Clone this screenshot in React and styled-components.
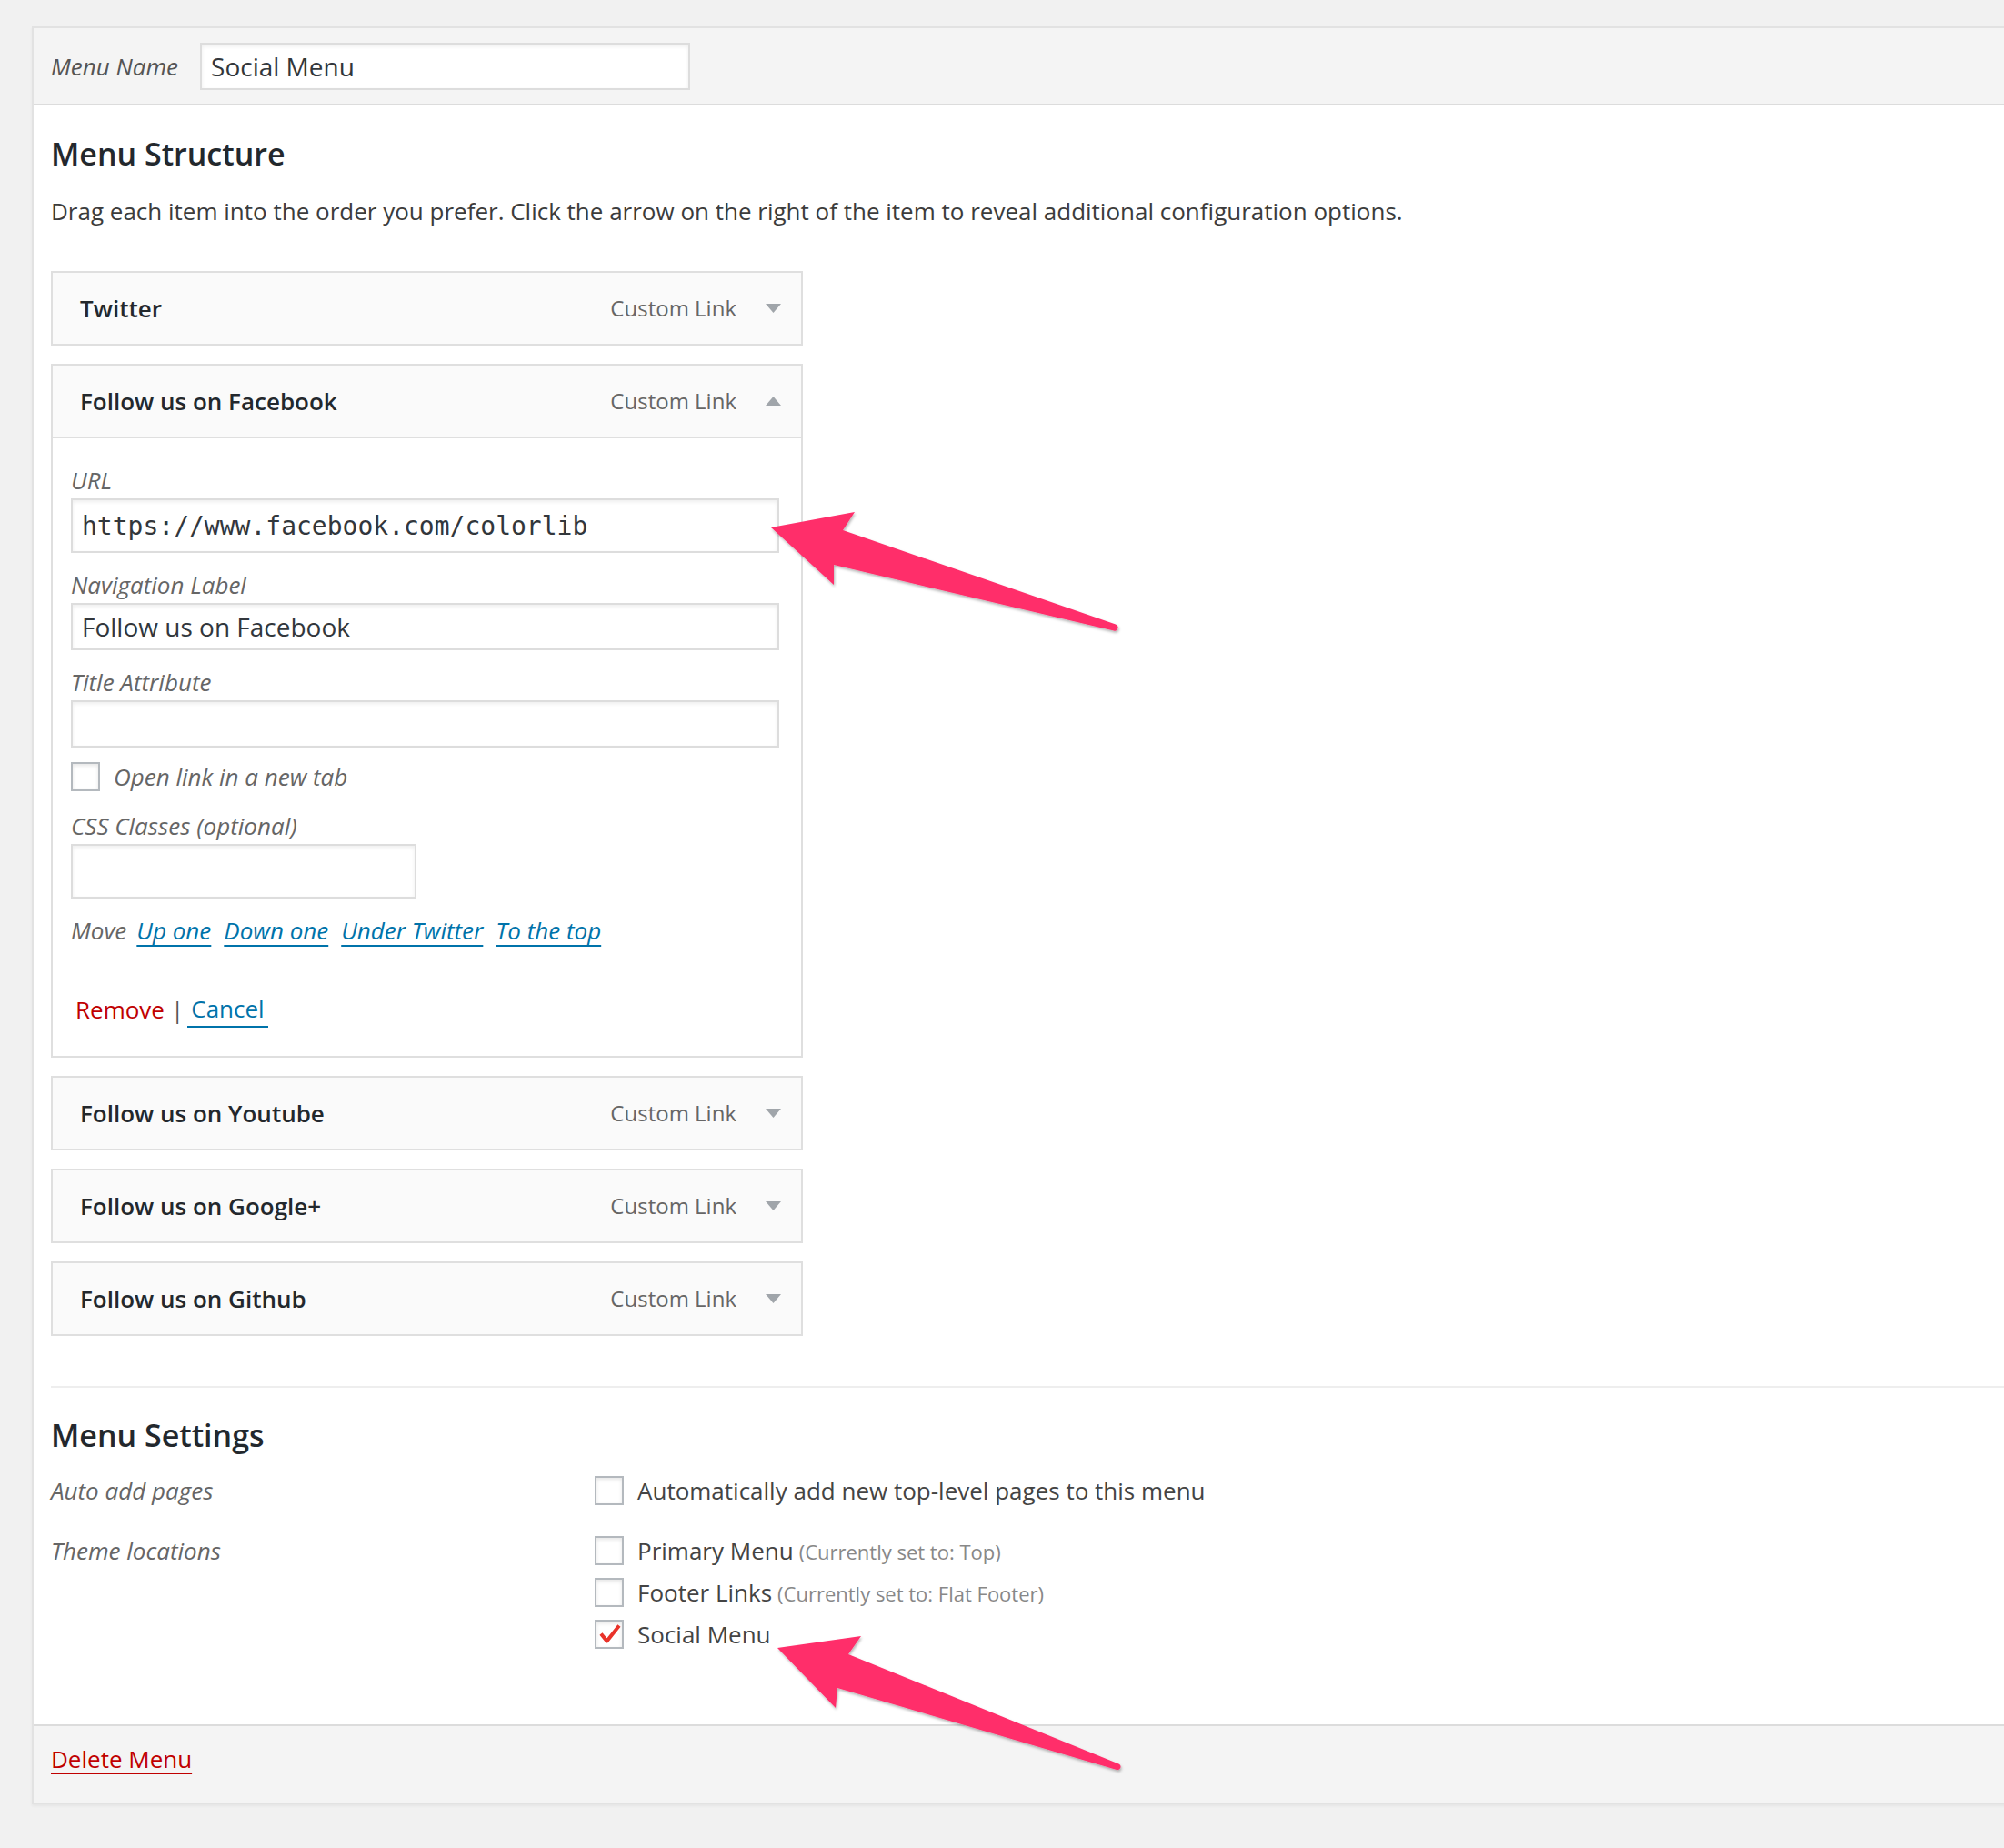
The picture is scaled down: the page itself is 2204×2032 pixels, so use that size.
import React from "react";
import styled, { createGlobalStyle } from "styled-components";

const GlobalStyle = createGlobalStyle`
  html, body { margin: 0; padding: 0; background: #f1f1f1; }
  body {
    font-family: "Open Sans", "Liberation Sans", sans-serif;
    color: #444;
    -webkit-font-smoothing: antialiased;
  }
  *, *::before, *::after { box-sizing: border-box; }
`;

const Page = styled.div`
  position: relative;
  width: 100%;
  height: 2032px;
  padding: 29px 0 0 35px;
  overflow: hidden;
`;

const Panel = styled.div`
  width: calc(100% + 40px);
  background: #fff;
  border: 2px solid #e2e2e2;
  box-shadow: 0 2px 3px rgba(0, 0, 0, 0.05);
`;

const Header = styled.div`
  display: flex;
  align-items: center;
  gap: 24px;
  background: #f4f4f4;
  border-bottom: 2px solid #dcdcdc;
  padding: 16px 19px 15px;
`;

const NameLabel = styled.label`
  font-size: 26px;
  font-style: italic;
  color: #555;
  line-height: 40px;
`;

const TextInput = styled.input`
  display: block;
  width: ${(p) => p.$w}px;
  height: ${(p) => p.$h}px;
  margin: 0;
  padding: 0 10px;
  border: 2px solid #dddddd;
  border-radius: 0;
  background: #fff;
  box-shadow: inset 0 2px 4px rgba(0, 0, 0, 0.07);
  font-family: ${(p) =>
    p.$mono ? '"DejaVu Sans Mono", "Liberation Mono", monospace' : '"Open Sans", sans-serif'};
  font-size: 28px;
  color: #32373c;
  outline: none;
`;

const Body = styled.div`
  padding: 30px 19px 0;
`;

const Heading = styled.h3`
  margin: 0;
  font-size: 34px;
  font-weight: 600;
  line-height: 46px;
  color: #23282d;
`;

const Description = styled.p`
  margin: 20px 0 0;
  font-size: 26px;
  line-height: 40px;
  color: #3c3c3c;
`;

const MenuList = styled.div`
  margin-top: 46px;
  width: 827px;
  display: flex;
  flex-direction: column;
  gap: 20px;
`;

const Handle = styled.div`
  height: 82px;
  display: flex;
  align-items: center;
  border: 2px solid #dfdfdf;
  background: #fafafa;
  padding: 0 22px 0 30px;
`;

const ItemTitle = styled.span`
  flex: 1;
  font-size: 26px;
  font-weight: 600;
  color: #23282d;
  line-height: 40px;
`;

const ItemType = styled.span`
  font-size: 24px;
  color: #666;
  margin-right: 32px;
  line-height: 40px;
`;

const Settings = styled.div`
  display: flex;
  flex-direction: column;
  border: 2px solid #dfdfdf;
  border-top: none;
  padding: 26px 24px 31px 20px;
`;

const FieldLabel = styled.label`
  display: block;
  margin-top: ${(p) => p.$mt || 0}px;
  font-size: 26px;
  font-style: italic;
  line-height: 40px;
  color: #666;
`;

const CheckRow = styled.label`
  display: flex;
  align-items: center;
  gap: 15px;
  height: 40px;
  margin-top: ${(p) => p.$mt || 0}px;
`;

const Box = styled.span`
  width: 32px;
  height: 32px;
  flex: none;
  display: flex;
  align-items: center;
  justify-content: center;
  border: 2px solid #b4b9be;
  background: #fff;
  box-shadow: inset 0 2px 4px rgba(0, 0, 0, 0.1);
`;

const CheckText = styled.span`
  font-size: 26px;
  line-height: 40px;
  font-style: ${(p) => (p.$italic ? "italic" : "normal")};
  color: ${(p) => (p.$italic ? "#666" : "#444")};
  white-space: nowrap;
`;

const Note = styled.span`
  font-size: 22px;
  color: #888;
  margin-left: 6px;
`;

const MoveRow = styled.div`
  display: flex;
  align-items: center;
  gap: 14px;
  height: 40px;
  margin-top: 15px;
  font-size: 26px;
  font-style: italic;
  color: #666;
`;

const MoveWord = styled.span`
  margin-right: -3px;
`;

const MoveLink = styled.a`
  color: #0073aa;
  text-decoration: underline;
  text-decoration-thickness: 2px;
  text-underline-offset: 6px;
  cursor: pointer;
`;

const Actions = styled.div`
  display: flex;
  align-items: center;
  height: 40px;
  margin-top: 47px;
  font-size: 26px;
`;

const RemoveLink = styled.a`
  color: #c00000;
  margin-left: 5px;
  text-decoration: none;
  cursor: pointer;
`;

const Sep = styled.span`
  color: #555;
  margin: 0 4px 0 7px;
`;

const CancelLink = styled.a`
  color: #0073aa;
  padding: 0 4px;
  line-height: 38px;
  border-bottom: 2px solid #0073aa;
  text-decoration: none;
  cursor: pointer;
`;

const SettingsSection = styled.div`
  margin-top: 55px;
  border-top: 2px solid #eeeeee;
  padding: 29px 0 79px;
`;

const SettingsGrid = styled.div`
  display: grid;
  grid-template-columns: 598px 1fr;
  row-gap: 26px;
  margin-top: 18px;
`;

const SettingName = styled.div`
  font-size: 26px;
  font-style: italic;
  line-height: 40px;
  color: #666;
`;

const Options = styled.div`
  display: flex;
  flex-direction: column;
  gap: 6px;
`;

const Footer = styled.div`
  background: #f4f4f4;
  border-top: 2px solid #dcdcdc;
  padding: 16px 19px 28px;
`;

const DeleteLink = styled.a`
  display: inline-block;
  font-size: 26px;
  line-height: 40px;
  color: #c00000;
  text-decoration: underline;
  text-decoration-thickness: 2px;
  text-underline-offset: 5px;
  cursor: pointer;
`;

const Overlay = styled.svg`
  position: absolute;
  top: 0;
  left: 0;
  pointer-events: none;
`;

const Triangle = ({ up }) => (
  <svg width="17" height="10" viewBox="0 0 17 10">
    <polygon points={up ? "0,10 17,10 8.5,0" : "0,0 17,0 8.5,10"} fill="#a0a5aa" />
  </svg>
);

const Checkbox = ({ checked }) => (
  <Box>
    {checked && (
      <svg width="28" height="28" viewBox="0 0 28 28">
        <path
          d="M5 13.5 L11.5 21.5 L25 4.5"
          fill="none"
          stroke="#e9332a"
          strokeWidth="4"
          strokeLinejoin="round"
        />
      </svg>
    )}
  </Box>
);

const MenuHandle = ({ title, open }) => (
  <Handle>
    <ItemTitle>{title}</ItemTitle>
    <ItemType>Custom Link</ItemType>
    <Triangle up={open} />
  </Handle>
);

export default function App() {
  return (
    <>
      <GlobalStyle />
      <Page>
        <Panel>
          <Header>
            <NameLabel>Menu Name</NameLabel>
            <TextInput $w={539} $h={52} defaultValue="Social Menu" />
          </Header>
          <Body>
            <Heading>Menu Structure</Heading>
            <Description>
              Drag each item into the order you prefer. Click the arrow on the right of the item to
              reveal additional configuration options.
            </Description>
            <MenuList>
              <MenuHandle title="Twitter" />
              <div>
                <MenuHandle title="Follow us on Facebook" open />
                <Settings>
                  <FieldLabel>URL</FieldLabel>
                  <TextInput $w={779} $h={60} $mono defaultValue="https://www.facebook.com/colorlib" />
                  <FieldLabel $mt={15}>Navigation Label</FieldLabel>
                  <TextInput $w={779} $h={52} defaultValue="Follow us on Facebook" />
                  <FieldLabel $mt={15}>Title Attribute</FieldLabel>
                  <TextInput $w={779} $h={52} defaultValue="" />
                  <CheckRow $mt={12}>
                    <Checkbox />
                    <CheckText $italic>Open link in a new tab</CheckText>
                  </CheckRow>
                  <FieldLabel $mt={14}>CSS Classes (optional)</FieldLabel>
                  <TextInput $w={380} $h={60} defaultValue="" />
                  <MoveRow>
                    <MoveWord>Move</MoveWord>
                    <MoveLink>Up one</MoveLink>
                    <MoveLink>Down one</MoveLink>
                    <MoveLink>Under Twitter</MoveLink>
                    <MoveLink>To the top</MoveLink>
                  </MoveRow>
                  <Actions>
                    <RemoveLink>Remove</RemoveLink>
                    <Sep>|</Sep>
                    <CancelLink>Cancel</CancelLink>
                  </Actions>
                </Settings>
              </div>
              <MenuHandle title="Follow us on Youtube" />
              <MenuHandle title="Follow us on Google+" />
              <MenuHandle title="Follow us on Github" />
            </MenuList>

            <SettingsSection>
              <Heading>Menu Settings</Heading>
              <SettingsGrid>
                <SettingName>Auto add pages</SettingName>
                <Options>
                  <CheckRow>
                    <Checkbox />
                    <CheckText>Automatically add new top-level pages to this menu</CheckText>
                  </CheckRow>
                </Options>
                <SettingName>Theme locations</SettingName>
                <Options>
                  <CheckRow>
                    <Checkbox />
                    <CheckText>
                      Primary Menu<Note>(Currently set to: Top)</Note>
                    </CheckText>
                  </CheckRow>
                  <CheckRow>
                    <Checkbox />
                    <CheckText>
                      Footer Links<Note>(Currently set to: Flat Footer)</Note>
                    </CheckText>
                  </CheckRow>
                  <CheckRow>
                    <Checkbox checked />
                    <CheckText>Social Menu</CheckText>
                  </CheckRow>
                </Options>
              </SettingsGrid>
            </SettingsSection>
          </Body>
          <Footer>
            <DeleteLink>Delete Menu</DeleteLink>
          </Footer>
        </Panel>

        <Overlay width="2204" height="2032" viewBox="0 0 2204 2032">
          <defs>
            <filter id="arrowShadow" x="-10%" y="-10%" width="120%" height="130%">
              <feDropShadow dx="1" dy="2" stdDeviation="1.5" floodColor="#000" floodOpacity="0.3" />
            </filter>
          </defs>
          <path
            d="M848 580 L940 563 L927 583 L1227 686.6 A3.5 3.5 0 0 1 1225 693.4 L917 621 L917 643 Z"
            fill="#ff2d6b"
            filter="url(#arrowShadow)"
          />
          <path
            d="M855 1812 L947 1799 L933 1819 L1231 1939.8 A3.5 3.5 0 0 1 1229 1946.2 L921 1856 L919 1878 Z"
            fill="#ff2d6b"
            filter="url(#arrowShadow)"
          />
        </Overlay>
      </Page>
    </>
  );
}
